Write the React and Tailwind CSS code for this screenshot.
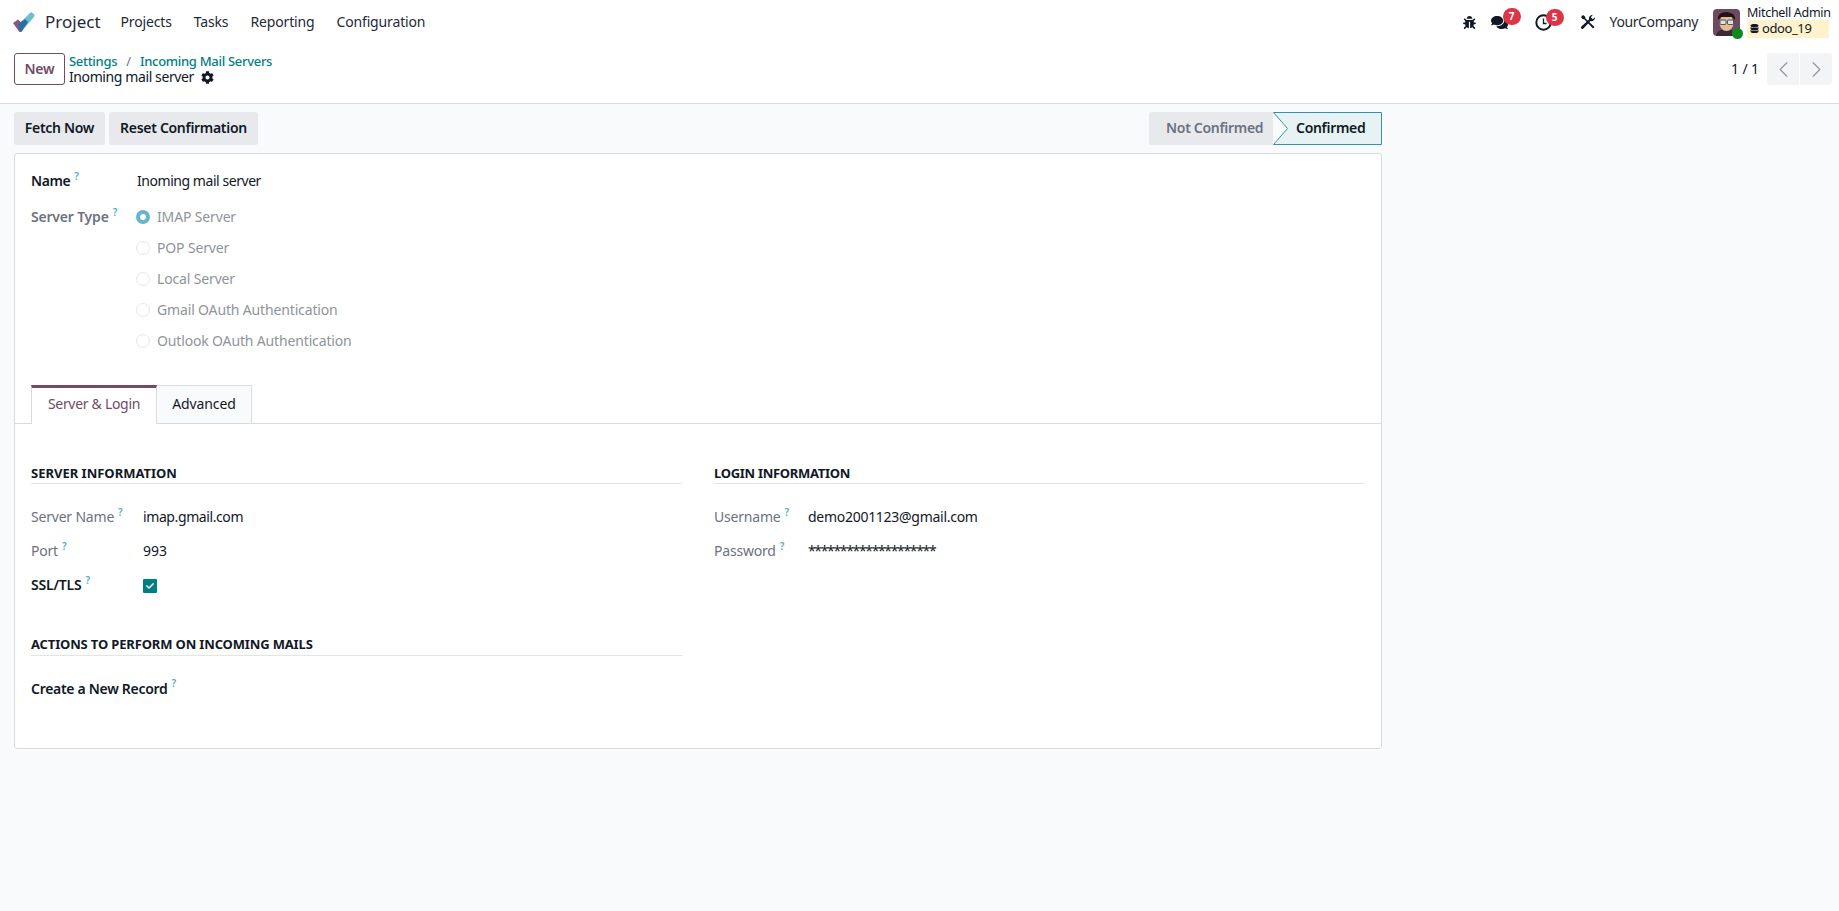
import { FaBug, FaComments, FaCog, FaDatabase, FaCheck } from 'react-icons/fa';
import { ChevronLeft, ChevronRight } from 'lucide-react';

function Help() {
  return <sup className="ml-[4px] text-[10px] font-semibold text-[#4fafd2] top-[-6px]">?</sup>;
}

function Badge({ n, left, top }) {
  return (
    <span className={`absolute ${left} ${top} flex h-[17px] w-[18px] items-center justify-center rounded-full bg-[#dc3545] text-[10px] font-bold text-white`}>
      {n}
    </span>
  );
}

function Logo() {
  return (
    <svg width="24" height="22" viewBox="0 0 24 22">
      <path d="M9 21 L22 6 Q23 4 22 3 L19 1 L7 13 Z" fill="#6bbfd0" />
      <path d="M1 12 L6 8.5 L13 15 L9 20.5 Q8 21.5 7 20.5 Z" fill="#875a7b" />
      <path d="M6.5 12.5 L13 8 L16 11 L10 20 Q9 21.5 8 20.5 L6 16 Z" fill="#2f6f9f" />
    </svg>
  );
}

function ClockIcon() {
  return (
    <svg width="17" height="17" viewBox="0 0 17 17" fill="none" stroke="#111827">
      <circle cx="8.5" cy="8.5" r="7.2" strokeWidth="2" />
      <path d="M8.5 4.5 V9.5 H11.5" strokeWidth="1.3" />
    </svg>
  );
}

function ToolsIcon() {
  return (
    <svg width="16" height="16" viewBox="0 0 16 16" className="ml-[28px]" fill="#111827">
      <path d="M1 3 L3 1 L5 2.5 L5.5 4.5 L14.5 13 L13 14.5 L4.5 5.5 L2.5 5 Z" />
      <path d="M15 3.2 A3.6 3.6 0 0 1 10.4 7 L3.4 14.6 A1.3 1.3 0 0 1 1.4 12.6 L9 5.6 A3.6 3.6 0 0 1 12.8 1 L10.8 3.2 L12.8 5.2 Z" />
    </svg>
  );
}

function Avatar() {
  return (
    <div className="relative h-[27px] w-[27px]">
      <svg width="27" height="27" viewBox="0 0 27 27" className="rounded-[4px]">
        <rect width="27" height="27" fill="#6d4a5f" />
        <path d="M3 27 Q4 20 13 20 Q22 20 24 27 Z" fill="#3a2a33" />
        <ellipse cx="13.5" cy="14" rx="7" ry="8" fill="#e3bc9a" />
        <path d="M5 11 Q4 3 14 3 Q23 4 22 11 L19 8 L8 8 Z" fill="#1d1518" />
        <rect x="7" y="11" width="6" height="4.5" rx="1" fill="#d9e1e2" stroke="#333" strokeWidth="0.8" />
        <rect x="14.5" y="11" width="6" height="4.5" rx="1" fill="#d9e1e2" stroke="#333" strokeWidth="0.8" />
      </svg>
      <span className="absolute bottom-[-3px] right-[-3px] h-[11px] w-[11px] rounded-full bg-[#0a8a1f]" />
    </div>
  );
}

function Radio({ label, checked }) {
  return (
    <div className="flex h-[31px] items-center gap-[7px] tracking-[-0.15px] text-[#8f949c]">
      {checked ? (
        <span className="h-[14px] w-[14px] rounded-full border-[4px] border-[#66b5cf] bg-white" />
      ) : (
        <span className="h-[14px] w-[14px] rounded-full border border-[#e5e7eb] bg-white" />
      )}
      <span>{label}</span>
    </div>
  );
}

function Section({ title, tr, h, children }) {
  return (
    <div>
      <div className={`${h} border-b border-[#e2e4e8] text-[13px] font-bold uppercase leading-[20px] ${tr} text-[#111827]`}>{title}</div>
      {children}
    </div>
  );
}

function Row({ label, w, value, dark }) {
  return (
    <div className="flex h-[34px] items-center">
      <div className={`${w} tracking-[-0.2px] ${dark ? 'font-semibold text-[#111827]' : 'text-[#6b7280]'}`}>
        {label}
        <Help />
      </div>
      <div>{value}</div>
    </div>
  );
}

export default function App() {
  return (
    <div className="flex min-h-[911px] flex-col bg-[#f9fafb] font-['Noto_Sans',sans-serif] text-[14px] text-[#111827]">
      {/* Navbar */}
      <div className="flex h-[44px] items-center justify-between bg-white pl-[12px] pr-[10px]">
        <div className="flex items-center">
          <Logo />
          <span className="ml-[9px] pb-[1px] text-[17px] text-[#1f2937]">Project</span>
          <div className="ml-[20px] flex gap-[22px] pb-[2px] tracking-[-0.15px] text-[#1f2937]">
            <span>Projects</span>
            <span>Tasks</span>
            <span>Reporting</span>
            <span>Configuration</span>
          </div>
        </div>
        <div className="flex items-center">
          <FaBug className="text-[13px] text-[#111827]" />
          <div className="relative ml-[15px]">
            <FaComments className="text-[17px] text-[#111827]" />
            <Badge n="7" left="left-[12px]" top="top-[-6px]" />
          </div>
          <div className="relative ml-[27px]">
            <ClockIcon />
            <Badge n="5" left="left-[11px]" top="top-[-5px]" />
          </div>
          <ToolsIcon />
          <span className="ml-[14px] pb-[2px] tracking-[-0.4px] text-[#1f2937]">YourCompany</span>
          <div className="ml-[15px]">
            <Avatar />
          </div>
          <div className="ml-[7px] w-[82px]">
            <div className="h-[14px] whitespace-nowrap text-[12.5px] leading-[14px] tracking-[-0.3px]">Mitchell Admin</div>
            <div className="flex h-[18px] items-center gap-[3px] bg-[#fff3cd] pb-[1px] pl-[3px] text-[13px] tracking-[-0.4px]">
              <FaDatabase className="text-[9px]" />
              odoo_19
            </div>
          </div>
        </div>
      </div>

      {/* Control panel */}
      <div className="flex h-[60px] justify-between border-b border-[#d8dadd] bg-white pl-[14px] pr-[7px] pt-[9px]">
        <div className="flex">
          <button className="h-[32px] w-[51px] rounded-[3px] border border-[#714b67] pb-[1px] font-semibold tracking-[-0.2px] text-[#714b67]">New</button>
          <div className="ml-[4px]">
            <div className="h-[16px] text-[13px] font-medium leading-[16px] tracking-[-0.3px] text-[#017e84]">
              Settings <span className="mx-[6px] font-normal text-[#6b7280]">/</span> Incoming Mail Servers
            </div>
            <div className="flex h-[16px] items-center text-[14px] leading-[16px] tracking-[-0.4px]">
              Inoming mail server
              <FaCog className="ml-[7px] text-[13px]" />
            </div>
          </div>
        </div>
        <div className="flex items-center self-start">
          <span className="mr-[8px] pb-[1px] tracking-[-0.1px]">1 / 1</span>
          <button className="flex h-[32px] w-[32px] items-center justify-center rounded-l-[3px] bg-[#f3f4f6] text-[#8f949c]">
            <ChevronLeft size={27} strokeWidth={1} />
          </button>
          <button className="ml-[1px] flex h-[32px] w-[32px] items-center justify-center rounded-r-[3px] bg-[#f3f4f6] text-[#8f949c]">
            <ChevronRight size={27} strokeWidth={1} />
          </button>
        </div>
      </div>

      {/* Action row + sheet */}
      <div className="w-[1382px] pl-[14px] pt-[8px]">
        <div className="flex justify-between">
          <div className="flex gap-[4px]">
            <button className="h-[33px] w-[91px] rounded-[3px] bg-[#e7e9ed] pb-[3px] font-semibold tracking-[-0.3px]">Fetch Now</button>
            <button className="h-[33px] w-[149px] rounded-[3px] bg-[#e7e9ed] pb-[3px] font-semibold tracking-[-0.3px]">Reset Confirmation</button>
          </div>
          <div className="flex h-[33px] tracking-[-0.3px]">
            <div className="flex w-[124px] items-center rounded-l-[3px] bg-[#e7e9ed] pb-[3px] pl-[17px] font-semibold text-[#6b7280]">Not Confirmed</div>
            <div className="relative flex w-[109px] items-center pb-[3px] pl-[23px] font-semibold">
              <svg className="absolute inset-0" width="109" height="33" viewBox="0 0 109 33">
                <path d="M0.5 0.5 H108.5 V32.5 H0.5 L14.5 16.5 Z" fill="#e6f2f3" stroke="#3a8fb0" strokeWidth="1" />
              </svg>
              <span className="relative">Confirmed</span>
            </div>
          </div>
        </div>

        <div className="mt-[8px] h-[596px] rounded-[3px] border border-[#d8dadd] bg-white">
          <div className="pl-[16px] pr-[16px] pt-[10px]">
            <div className="flex h-[32px] items-center">
              <div className="w-[106px] font-semibold tracking-[-0.4px]">Name<Help /></div>
              <div className="tracking-[-0.45px]">Inoming mail server</div>
            </div>
            <div className="mt-[5px] flex">
              <div className="w-[105px] pt-[5px] font-semibold tracking-[-0.2px] text-[#6b7280]">Server Type<Help /></div>
              <div>
                <Radio label="IMAP Server" checked />
                <Radio label="POP Server" />
                <Radio label="Local Server" />
                <Radio label="Gmail OAuth Authentication" />
                <Radio label="Outlook OAuth Authentication" />
              </div>
            </div>
          </div>

          {/* Tabs */}
          <div className="mt-[29px] flex h-[39px] border-b border-[#d8dadd] pl-[16px]">
            <div className="flex h-[39px] w-[126px] items-center justify-center border-x border-[#d8dadd] border-t-[3px] border-t-[#714b67] bg-white pb-[5px] tracking-[-0.3px] text-[#714b67]">Server &amp; Login</div>
            <div className="flex h-[38px] w-[95px] items-center justify-center border-r border-t border-[#d8dadd] bg-[#f9fafb] pb-[2px] tracking-[-0.1px]">Advanced</div>
          </div>

          {/* Form groups */}
          <div className="grid grid-cols-2 gap-x-[32px] pl-[16px] pr-[16px] pt-[39px]">
            <div>
              <Section title="Server Information" h="h-[21px]" tr="tracking-[0px]">
                <div className="pt-[15px]">
                  <Row label="Server Name" w="w-[112px]" value={<span className="tracking-[-0.4px]">imap.gmail.com</span>} />
                  <Row label="Port" w="w-[112px]" value="993" />
                  <Row label="SSL/TLS" w="w-[112px]" dark value={
                    <span className="mt-[4px] flex h-[14px] w-[14px] items-center justify-center rounded-[1px] bg-[#017e84] text-[8px] text-white"><FaCheck /></span>
                  } />
                </div>
              </Section>
              <div className="pt-[33px]">
                <Section title="Actions to Perform on Incoming Mails" h="h-[22px]" tr="tracking-[-0.15px]">
                  <div className="flex h-[34px] items-center pt-[31px] font-semibold tracking-[-0.3px]">Create a New Record<Help /></div>
                </Section>
              </div>
            </div>
            <Section title="Login Information" h="h-[21px]" tr="tracking-[-0.3px]">
              <div className="pt-[15px]">
                <Row label="Username" w="w-[94px]" value={<span className="tracking-[-0.28px]">demo2001123@gmail.com</span>} />
                <Row label="Password" w="w-[94px]" value={<span className="tracking-[-1.35px]">********************</span>} />
              </div>
            </Section>
          </div>
        </div>
      </div>
    </div>
  );
}
